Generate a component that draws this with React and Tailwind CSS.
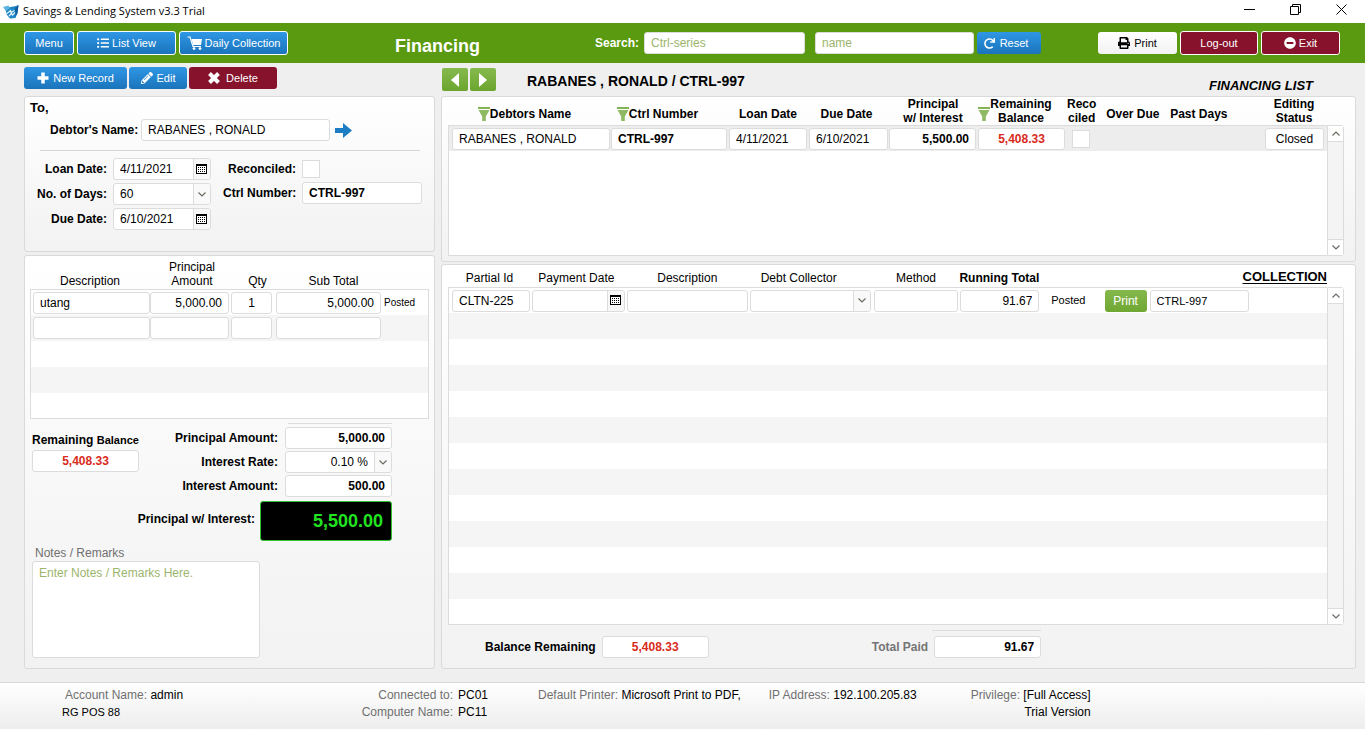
import React from "react";
import { FaListUl, FaPencilAlt, FaRedo, FaPrint, FaMinusCircle } from "react-icons/fa";

const FIELD_BASE = "h-[22px] min-w-0 rounded-[3px] border border-[#dcdcdc] bg-white px-1.5 leading-4 outline-none placeholder:text-[#9bb56c]";
const FIELD = `${FIELD_BASE} text-[12px] text-black`;
const FIELD_RED = `${FIELD_BASE} text-[12px] text-center font-bold text-[#d92b1c]`;
const FIELD_SMALL = `${FIELD_BASE} text-[11px] text-black`;
const BLUE = "flex items-center justify-center bg-linear-to-b from-[#2f97e6] to-[#1a74bb] text-[11px] text-white rounded-[3px]";
const RED = "flex items-center justify-center bg-[#87122c] text-[11px] text-white rounded-[3px]";
const PANEL = "rounded-[3px] border border-[#dadada] bg-linear-to-b from-white to-[#f2f2f2]";

function Logo() {
  return (
    <svg viewBox="0 0 16 16" className="h-4 w-4" aria-hidden="true">
      <path d="M2 4 L13 2 L15.500 1 L14.500 9 L12.500 14 L7 14.500 L4 11 Z" fill="#2086c6" />
      <path d="M0 3 L5.500 1.500 L7 4 L3 7 Z" fill="#5db4e2" />
      <path d="M12 4 L15.500 1 L14.500 9 L12.500 12 Z" fill="#0f5d9a" />
      <path d="M4 9.500 L7.500 6.500 L8 8.500 L11.500 6.500 M6 12 L8.500 9.500 L9.500 11 L12 8.500" fill="none" stroke="#e6f5fd" strokeWidth="1.200" />
    </svg>
  );
}

function CartIcon() {
  return (
    <svg viewBox="0 0 16 14" className="h-3.5 w-4" fill="#fff" aria-hidden="true">
      <path d="M0.500 1 H3 L6 10.500 H14" fill="none" stroke="#fff" strokeWidth="1.200" />
      <path d="M4.500 3 H15 L14 9 H6.200 Z" />
      <circle cx="7" cy="12.600" r="1.400" />
      <circle cx="13" cy="12.600" r="1.400" />
    </svg>
  );
}

function Funnel() {
  return (
    <svg viewBox="0 0 12 14" className="h-3.5 w-3 shrink-0" aria-hidden="true">
      <path d="M0 0 H12 V2 H0 Z" fill="#84b355" />
      <path d="M0.500 3 H11.500 L7.800 9.500 V14 H4.200 V9.500 Z" fill="#8fba63" />
    </svg>
  );
}

function Chevron({ up }) {
  return (
    <svg viewBox="0 0 8 5" className="h-[5px] w-2" fill="none" stroke="#6b6b60" strokeWidth="1.200" aria-hidden="true">
      <path d={up ? "M0.500 4.500 L4 1 L7.500 4.500" : "M0.500 0.500 L4 4 L7.500 0.500"} />
    </svg>
  );
}

function CalendarIcon() {
  return (
    <svg viewBox="0 0 11 11" className="h-[11px] w-[11px]" shapeRendering="crispEdges" aria-hidden="true">
      <rect x="0.500" y="0.500" width="10" height="9" fill="#fff" stroke="#000" />
      <rect x="0" y="0" width="11" height="2" fill="#000" />
      <path d="M2 3.500 H9 M2 5.500 H9 M2 7.500 H9" stroke="#000" strokeDasharray="1 1" />
    </svg>
  );
}

function DateField({ id, label, value, className }) {
  return (
    <div className={`flex h-[22px] overflow-hidden rounded-[3px] border border-[#dcdcdc] bg-white ${className || ""}`}>
      <input id={id} aria-label={label} defaultValue={value} className="min-w-0 flex-1 px-1.5 text-[12px] outline-none" />
      <button type="button" aria-label="Pick a date" className="flex w-[17px] items-center justify-center border-l border-[#dcdcdc] bg-[#f7f7f7] pr-px">
        <CalendarIcon />
      </button>
    </div>
  );
}

function SelectField({ id, label, value, className, right }) {
  return (
    <div className={`relative flex h-[22px] overflow-hidden rounded-[3px] border border-[#dcdcdc] bg-white ${className || ""}`}>
      <select id={id} aria-label={label} defaultValue={value} className={`w-full appearance-none bg-transparent pl-1.5 pr-[23px] text-[12px] outline-none ${right ? "text-right [text-align-last:right]" : ""}`}>
        <option>{value}</option>
      </select>
      <span className="pointer-events-none absolute inset-y-0 right-0 flex w-[17px] items-center justify-center border-l border-[#dcdcdc] bg-[#f9f9f9]">
        <Chevron />
      </span>
    </div>
  );
}

function ScrollBar({ className }) {
  return (
    <div className={`flex w-[17px] shrink-0 flex-col justify-between rounded-r-[3px] border border-[#dcdcdc] bg-[#f4f4f4] ${className}`}>
      <button type="button" aria-label="Scroll up" className="flex h-4 items-center justify-center border-b border-[#dcdcdc] bg-white"><Chevron up /></button>
      <button type="button" aria-label="Scroll down" className="flex h-4 items-center justify-center border-t border-[#dcdcdc] bg-white"><Chevron /></button>
    </div>
  );
}

function TickBox({ id, label }) {
  return <input id={id} aria-label={label} type="checkbox" className="block h-[18px] w-[18px] appearance-none border border-[#dcdcdc] bg-white" />;
}

function TitleBar() {
  return (
    <div className="flex h-[23px] items-center bg-white pl-[3px]">
      <Logo />
      <span className="ml-1 font-['Open_Sans','Noto_Sans',sans-serif] text-[11px]">Savings &amp; Lending System v3.3 Trial</span>
      <div className="ml-auto flex items-center gap-[35px] pr-[18px] pb-1">
        <button type="button" aria-label="Minimize"><svg viewBox="0 0 11 11" className="h-[11px] w-[11px]" stroke="#000" aria-hidden="true"><path d="M0 5.500 H11" /></svg></button>
        <button type="button" aria-label="Restore"><svg viewBox="0 0 11 11" className="h-[11px] w-[11px]" fill="none" stroke="#000" aria-hidden="true"><path d="M0.500 2.500 H8.500 V10.500 H0.500 Z M2.500 2.500 V0.500 H10.500 V8.500 H8.500" /></svg></button>
        <button type="button" aria-label="Close"><svg viewBox="0 0 11 11" className="h-[11px] w-[11px]" fill="none" stroke="#000" aria-hidden="true"><path d="M0.500 0.500 L10.500 10.500 M10.500 0.500 L0.500 10.500" /></svg></button>
      </div>
    </div>
  );
}

function Header() {
  return (
    <header className="flex h-10 items-center bg-[#5a9a10] pl-6 pr-[25px]">
      <nav className="flex gap-[3px]">
        <button type="button" className={`${BLUE} h-6 w-[50px] border border-white`}>Menu</button>
        <button type="button" className={`${BLUE} h-6 w-[99px] gap-[3px] border border-white`}><FaListUl className="h-3 w-3" />List View</button>
        <button type="button" className={`${BLUE} h-6 w-[109px] gap-[2px] border border-white`}><CartIcon />Daily Collection</button>
      </nav>
      <h1 className="ml-[107px] pt-1.5 text-[18px] leading-6 font-bold text-white">Financing</h1>
      <label htmlFor="search-ctrl" className="ml-auto text-[12px] font-bold text-white">Search:</label>
      <input id="search-ctrl" placeholder="Ctrl-series" className={`${FIELD} ml-[5px] w-[161px]`} />
      <input aria-label="Search by name" placeholder="name" className={`${FIELD} ml-2.5 w-[159px]`} />
      <button type="button" className={`${BLUE} ml-[3px] h-[22px] w-16 gap-[5px] pr-1.5`}><FaRedo className="h-[11px] w-[11px]" />Reset</button>
      <div className="ml-[57px] flex gap-[3px]">
        <button type="button" className="flex h-[22px] w-[79px] items-center justify-center gap-1 self-center rounded-[3px] bg-linear-to-b from-white to-[#f2f2f2] text-[11px]"><FaPrint className="h-3 w-3" />Print</button>
        <button type="button" className={`${RED} h-6 w-[78px] border border-white`}>Log-out</button>
        <button type="button" className={`${RED} h-6 w-[79px] gap-[3px] border border-white`}><FaMinusCircle className="h-3 w-3" />Exit</button>
      </div>
    </header>
  );
}

function LoanForm() {
  return (
    <section className={`${PANEL} h-[156px] pl-[5px] pr-3`}>
      <h2 className="pt-[3px] text-[13px] leading-4 font-bold">To,</h2>
      <div className="mt-[3px] ml-5 flex items-center">
        <label htmlFor="debtor" className="w-[88px] text-[12px] font-bold whitespace-nowrap">Debtor's Name:</label>
        <input id="debtor" defaultValue="RABANES , RONALD" className={`${FIELD} ml-[3px] w-[189px]`} />
        <button type="button" aria-label="Open debtor" className="ml-[5px]">
          <svg viewBox="0 0 17 15" className="h-[15px] w-[17px]" aria-hidden="true"><path d="M0 5 H8 V0 L17 7.500 L8 15 V10 H0 Z" fill="#1c7cc4" /></svg>
        </button>
      </div>
      <hr className="mt-[9px] mr-0.5 ml-2.5 border-[#d6d6d6]" />
      <div className="mt-[7px] flex">
        <div className="grid grid-cols-[77px_98px] items-center gap-x-1.5 gap-y-[3px] text-[12px] whitespace-nowrap">
          <label htmlFor="loan-date" className="text-right font-bold">Loan Date:</label>
          <DateField id="loan-date" value="4/11/2021" />
          <label htmlFor="days" className="text-right font-bold">No. of Days:</label>
          <SelectField id="days" value="60" />
          <label htmlFor="due-date" className="text-right font-bold">Due Date:</label>
          <DateField id="due-date" value="6/10/2021" />
        </div>
        <div className="ml-3 grid grid-cols-[73px_120px] content-start items-center gap-x-1.5 gap-y-[2px] text-[12px]">
          <label htmlFor="reconciled" className="flex h-[22px] items-center justify-end font-bold">Reconciled:</label>
          <TickBox id="reconciled" />
          <label htmlFor="ctrl-number" className="text-right font-bold whitespace-nowrap">Ctrl Number:</label>
          <input id="ctrl-number" defaultValue="CTRL-997" className={`${FIELD} font-bold`} />
        </div>
      </div>
    </section>
  );
}

function ItemsTable() {
  const rows = [["utang", "5,000.00", "1", "5,000.00", "Posted"], ["", "", "", "", ""]];
  return (
    <table className="w-full table-fixed border-separate border-spacing-0 text-[12px]">
      <colgroup>
        <col className="w-[120px]" /><col className="w-20" /><col className="w-[43px]" /><col className="w-[109px]" /><col />
      </colgroup>
      <thead>
        <tr className="h-[33px] align-bottom leading-[14px] [&>th]:p-0 [&>th]:pb-px [&>th]:font-normal">
          <th>Description</th><th className="!pl-1">Principal<br />Amount</th><th className="!pl-3">Qty</th><th className="!pl-3">Sub Total</th><th aria-label="State" />
        </tr>
      </thead>
      <tbody className="[&_td]:p-0 [&_td:first-child]:border-l [&_td:last-child]:border-r [&_td]:border-[#dcdcdc] [&>tr:first-child>td]:border-t [&>tr:last-child>td]:border-b [&>tr:nth-child(even)]:bg-[#f5f5f5] [&>tr:nth-child(odd)]:bg-white">
        {rows.map((r, i) => (
          <tr key={i} className="h-[26px]">
            <td className="!pl-0.5"><input aria-label="Description" defaultValue={r[0]} className={`${FIELD} block w-[117px]`} /></td>
            <td><input aria-label="Principal amount" defaultValue={r[1]} className={`${FIELD} block w-[79px] text-right`} /></td>
            <td className="!pl-px"><input aria-label="Quantity" defaultValue={r[2]} className={`${FIELD} block w-[41px] text-center`} /></td>
            <td className="!pl-[3px]"><input aria-label="Sub total" defaultValue={r[3]} className={`${FIELD} block w-[105px] text-right`} /></td>
            <td className="!pl-0.5 text-[10px]">{r[4]}</td>
          </tr>
        ))}
        {[0, 1, 2].map((i) => (
          <tr key={i} className="h-[26px]" aria-hidden="true"><td className="border-r" colSpan={5} /></tr>
        ))}
      </tbody>
    </table>
  );
}

function LoanDetails() {
  return (
    <section className={`${PANEL} mt-[3px] flex-1 px-[5px] pb-2.5`}>
      <ItemsTable />
      <div className="mt-1 flex pr-[37px] pl-0.5 text-[12px] whitespace-nowrap">
        <div className="pt-2">
          <label htmlFor="remaining" className="block leading-[18px] font-bold">Remaining <span className="text-[11px]">Balance</span></label>
          <input id="remaining" defaultValue="5,408.33" className={`${FIELD_RED} mt-px block w-[107px]`} />
        </div>
        <div className="flex flex-1 flex-col items-end gap-0.5">
          <div className="w-[104px] border-t border-[#dcdcdc] pb-px" />
          <div className="flex items-center gap-[7px]">
            <label htmlFor="principal" className="font-bold">Principal Amount:</label>
            <input id="principal" defaultValue="5,000.00" className={`${FIELD} w-[107px] text-right font-bold`} />
          </div>
          <div className="flex items-center gap-[7px]">
            <label htmlFor="rate" className="font-bold">Interest Rate:</label>
            <SelectField id="rate" value="0.10 %" right className="w-[107px]" />
          </div>
          <div className="flex items-center gap-[7px]">
            <label htmlFor="interest" className="font-bold">Interest Amount:</label>
            <input id="interest" defaultValue="500.00" className={`${FIELD} w-[107px] text-right font-bold`} />
          </div>
          <div className="mt-0.5 -ml-5 flex items-center gap-[5px]">
            <label htmlFor="total" className="pb-1 font-bold">Principal w/ Interest:</label>
            <input id="total" defaultValue="5,500.00" className="h-10 w-[132px] rounded-[3px] border border-[#2fc32f] bg-black pr-2 text-right text-[18px] font-bold text-[#21e421]" />
          </div>
        </div>
      </div>
      <label htmlFor="notes" className="mt-1 ml-[5px] block text-[12px] leading-4 text-[#707070]">Notes / Remarks</label>
      <textarea id="notes" placeholder="Enter Notes / Remarks Here." className="ml-0.5 block h-[97px] w-[228px] resize-none rounded-[3px] border border-[#dcdcdc] bg-white px-1.5 py-[3px] text-[12px] leading-4 placeholder:text-[#9bb56c]" />
    </section>
  );
}

const BODY = "[&_td]:p-0 [&_td]:border-[#dcdcdc] [&_td:first-child]:border-l [&>tr:first-child>td]:border-t [&>tr:last-child>td]:border-b";

function FinancingList() {
  return (
    <section className={`${PANEL} flex pr-[11px] pb-[5px] pl-1.5`}>
      <table className="min-w-0 flex-1 table-fixed border-separate border-spacing-0 text-[12px]">
        <colgroup>
          <col className="w-[163px]" /><col className="w-[117px]" /><col className="w-20" /><col className="w-[81px]" /><col className="w-[88px]" /><col className="w-[90px]" /><col className="w-[29px]" /><col className="w-[73px]" /><col className="w-[61px]" /><col /><col className="w-[62px]" />
        </colgroup>
        <thead>
          <tr className="h-7 align-bottom leading-[14px] font-bold whitespace-nowrap [&>th]:p-0">
            <th><span className="flex items-center justify-center pr-2.5 pb-1"><Funnel />Debtors Name</span></th>
            <th><span className="flex items-center justify-center pr-6 pb-1"><Funnel />Ctrl Number</span></th>
            <th className="!pb-1">Loan Date</th>
            <th className="!pr-1 !pb-1">Due Date</th>
            <th>Principal<br />w/ Interest</th>
            <th><span className="flex items-end justify-center pr-3.5"><span className="pb-1"><Funnel /></span><span>Remaining<br />Balance</span></span></th>
            <th>Reco<br />ciled</th>
            <th className="!pb-1">Over Due</th>
            <th className="!pr-0.5 !pb-1">Past Days</th>
            <th aria-label="Remarks" />
            <th className="!pr-1">Editing<br />Status</th>
          </tr>
        </thead>
        <tbody className={BODY}>
          <tr className="h-[26px] bg-[#ededed]">
            <td className="!pl-[3px]"><input aria-label="Debtor" defaultValue="RABANES , RONALD" className={`${FIELD} block w-[158px]`} /></td>
            <td><input aria-label="Ctrl number" defaultValue="CTRL-997" className={`${FIELD} block w-[116px] font-bold`} /></td>
            <td className="!pl-px"><input aria-label="Loan date" defaultValue="4/11/2021" className={`${FIELD} block w-[78px]`} /></td>
            <td className="!pl-px"><input aria-label="Due date" defaultValue="6/10/2021" className={`${FIELD} block w-[79px]`} /></td>
            <td><input aria-label="Principal with interest" defaultValue="5,500.00" className={`${FIELD} block w-[87px] text-right font-bold`} /></td>
            <td className="!pl-px"><input aria-label="Remaining balance" defaultValue="5,408.33" className={`${FIELD_RED} block w-[87px]`} /></td>
            <td className="!pl-[5px]"><TickBox label="Reconciled" /></td>
            <td /><td /><td />
            <td><input aria-label="Editing status" defaultValue="Closed" className={`${FIELD} block w-[59px] text-center`} /></td>
          </tr>
          <tr className="h-[105px] bg-white" aria-hidden="true"><td colSpan={11} /></tr>
        </tbody>
      </table>
      <ScrollBar className="mt-7" />
    </section>
  );
}

function Collection() {
  return (
    <section className={`${PANEL} mt-0.5 flex-1 pr-[11px] pl-1.5`}>
      <div className="flex">
        <table className="min-w-0 flex-1 table-fixed border-separate border-spacing-0 text-[12px]">
          <colgroup>
            <col className="w-[83px]" /><col className="w-[95px]" /><col className="w-[123px]" /><col className="w-[124px]" /><col className="w-[87px]" /><col className="w-[81px]" /><col className="w-[61px]" /><col className="w-[45px]" /><col className="w-[97px]" /><col />
          </colgroup>
          <thead>
            <tr className="h-[22px] align-bottom leading-[14px] whitespace-nowrap [&>th]:p-0 [&>th]:pb-0.5 [&>th]:font-normal">
              <th>Partial Id</th><th className="!pr-1">Payment Date</th><th>Description</th><th className="!pr-6">Debt Collector</th><th>Method</th><th className="!pr-2 !font-bold">Running Total</th>
              <th aria-label="State" /><th aria-label="Print" /><th aria-label="Ctrl number" />
              <th className="!pb-[3px] text-right text-[13px] !font-bold underline underline-offset-2">COLLECTION</th>
            </tr>
          </thead>
          <tbody className={`${BODY} [&>tr:nth-child(even)]:bg-[#f5f5f5] [&>tr:nth-child(odd)]:bg-white`}>
            <tr className="h-[26px]">
              <td className="!pl-[3px]"><input aria-label="Partial id" defaultValue="CLTN-225" className={`${FIELD} block w-[78px]`} /></td>
              <td className="!pl-px"><DateField label="Payment date" value="" className="w-[93px]" /></td>
              <td className="!pl-px"><input aria-label="Description" className={`${FIELD} block w-[121px]`} /></td>
              <td className="!pl-px"><SelectField label="Debt collector" value="" className="w-[121px]" /></td>
              <td className="!pl-px"><input aria-label="Method" className={`${FIELD} block w-[84px]`} /></td>
              <td className="!pl-px"><input aria-label="Running total" defaultValue="91.67" className={`${FIELD} block w-[79px] text-right`} /></td>
              <td className="!pl-1 text-[11px]">Posted</td>
              <td colSpan={3}>
                <div className="flex gap-[3px] -ml-0.5">
                  <button type="button" className="h-[22px] w-[42px] rounded-[3px] bg-linear-to-b from-[#85b84c] to-[#6fa732] text-[12px] text-white">Print</button>
                  <input aria-label="Ctrl number" defaultValue="CTRL-997" className={`${FIELD_SMALL} w-[99px]`} />
                </div>
              </td>
            </tr>
            {Array.from({ length: 12 }, (_, i) => (
              <tr key={i} className="h-[26px]" aria-hidden="true"><td colSpan={10} /></tr>
            ))}
          </tbody>
        </table>
        <ScrollBar className="mt-[22px]" />
      </div>
      <div className="flex items-start pt-[5px] pl-[37px] text-[12px] font-bold">
        <label htmlFor="balance" className="pt-[7px] leading-5">Balance Remaining</label>
        <input id="balance" defaultValue="5,408.33" className={`${FIELD_RED} mt-1.5 ml-1.5 w-[107px]`} />
        <label htmlFor="paid" className="ml-[163px] pt-[7px] leading-5 text-[#757575]">Total Paid</label>
        <div className="ml-1 border-t border-[#dcdcdc] pt-[5px] pl-0.5">
          <input id="paid" defaultValue="91.67" className={`${FIELD} block w-[107px] text-right font-bold`} />
        </div>
      </div>
    </section>
  );
}

function Footer() {
  return (
    <footer className="flex h-[47px] border-t border-[#d8d8d8] bg-linear-to-b from-white to-[#ededed] pt-1 text-[12px] leading-[17px] whitespace-nowrap">
      <div className="ml-[62px] w-[126px]">
        <p className="pl-[3px]"><span className="text-[#707070]">Account Name:</span> admin</p>
        <p className="text-[11px]">RG POS 88</p>
      </div>
      <dl className="ml-[165px] grid grid-cols-[100px_60px] content-start gap-x-[5px]">
        <dt className="text-right text-[#707070]">Connected to:</dt><dd>PC01</dd>
        <dt className="text-right text-[#707070]">Computer Name:</dt><dd>PC11</dd>
      </dl>
      <p className="ml-5"><span className="text-[#707070]">Default Printer:</span> Microsoft Print to PDF,</p>
      <p className="ml-7"><span className="text-[#707070]">IP Address:</span> 192.100.205.83</p>
      <div className="ml-[54px] text-right">
        <p><span className="text-[#707070]">Privilege:</span> [Full Access]</p>
        <p>Trial Version</p>
      </div>
    </footer>
  );
}

export default function App() {
  return (
    <div className="flex min-h-screen flex-col bg-[#efefef] font-['Liberation_Sans',Arial,sans-serif] text-black">
      <TitleBar />
      <Header />
      <main className="flex flex-1 gap-1.5 pr-[9px] pb-[13px] pl-6">
        <div className="flex w-[411px] shrink-0 flex-col">
          <div className="flex h-[33px] gap-0.5 pt-1">
            <button type="button" className={`${BLUE} h-[22px] w-[103px] gap-1`}>
              <svg viewBox="0 0 12 12" className="h-3 w-3" stroke="#fff" strokeWidth="3.500" aria-hidden="true"><path d="M6 0.500 V11.500 M0.500 6 H11.500" /></svg>
              New Record
            </button>
            <button type="button" className={`${BLUE} h-[22px] w-[58px] gap-1`}><FaPencilAlt className="h-3 w-3" />Edit</button>
            <button type="button" className={`${RED} h-[22px] w-[88px] gap-1.5`}>
              <svg viewBox="0 0 12 12" className="h-3 w-3" stroke="#fff" strokeWidth="4" aria-hidden="true"><path d="M1.500 1.500 L10.500 10.500 M10.500 1.500 L1.500 10.500" /></svg>
              Delete
            </button>
          </div>
          <LoanForm />
          <LoanDetails />
        </div>
        <div className="flex min-w-0 flex-1 flex-col">
          <div className="flex h-[33px] items-start pt-[5px]">
            <div className="ml-px flex gap-0.5">
              <button type="button" aria-label="Previous record" className="flex h-[23px] w-[26px] items-center justify-center rounded-[2px] bg-linear-to-b from-[#86b94e] to-[#6ba52d]"><svg viewBox="0 0 8 14" className="h-3.5 w-2" fill="#fff" aria-hidden="true"><path d="M8 0 V14 L0 7 Z" /></svg></button>
              <button type="button" aria-label="Next record" className="flex h-[23px] w-[26px] items-center justify-center rounded-[2px] bg-linear-to-b from-[#86b94e] to-[#6ba52d]"><svg viewBox="0 0 8 14" className="h-3.5 w-2" fill="#fff" aria-hidden="true"><path d="M0 0 V14 L8 7 Z" /></svg></button>
            </div>
            <h2 className="ml-[31px] pt-[3px] text-[14px] leading-5 font-bold">RABANES , RONALD / CTRL-997</h2>
            <h2 className="mr-[43px] ml-auto pt-2.5 text-[13px] leading-4 font-bold italic">FINANCING LIST</h2>
          </div>
          <FinancingList />
          <Collection />
        </div>
      </main>
      <Footer />
    </div>
  );
}
